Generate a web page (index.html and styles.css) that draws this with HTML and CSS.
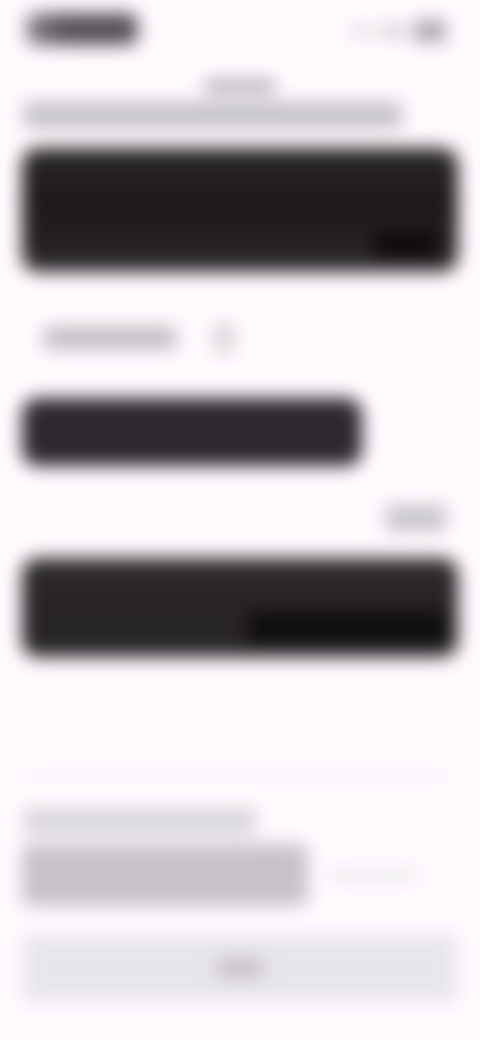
FILE: index.html
```html
<!DOCTYPE html>
<html lang="en">
<head>
<meta charset="utf-8">
<title>Conversation</title>
<link rel="stylesheet" href="styles.css">
</head>
<body>
<main class="screen">
  <header class="top">
    <div class="status-pill"></div>
    <div class="status-icons">
      <span class="dot small"></span>
      <span class="dot mid"></span>
      <span class="dot big"></span>
    </div>
  </header>
  <div class="date-label"></div>
  <div class="intro-line"></div>

  <section class="bubble bubble-one">
    <div class="bubble-dark"></div>
  </section>

  <div class="reaction-row">
    <div class="reaction-label"></div>
    <div class="reaction-icon"></div>
  </div>

  <section class="bubble bubble-two"></section>

  <div class="meta-right"><div class="meta-label"></div></div>

  <section class="bubble bubble-three">
    <div class="bubble-dark-wide"></div>
  </section>

  <div class="divider"></div>

  <footer class="composer">
    <div class="composer-title"></div>
    <div class="composer-row">
      <div class="composer-input"></div>
      <div class="composer-hint"></div>
    </div>
    <div class="send-button"><span class="send-label"></span></div>
  </footer>
</main>
</body>
</html>
```

FILE: styles.css
```css
html, body {
  margin: 0;
  padding: 0;
  background: #fefafe;
}
.screen {
  width: 480px;
  height: 1040px;
  box-sizing: border-box;
  padding: 14px 22px 0;
  display: flex;
  flex-direction: column;
  filter: blur(9px);
  overflow: hidden;
}
.top {
  display: flex;
  justify-content: space-between;
  align-items: center;
  height: 30px;
  padding: 0 12px 0 4px;
}
.status-pill {
  width: 112px;
  height: 32px;
  border-radius: 10px;
  background: linear-gradient(90deg, #8a848a 0, #565056 35%, #565056 100%);
}
.status-icons {
  display: flex;
  align-items: center;
  gap: 10px;
  margin-top: 4px;
}
.dot { display: block; border-radius: 4px; }
.dot.small { width: 20px; height: 8px; background: #d0ccd1; }
.dot.mid { width: 22px; height: 12px; background: #c8c4c9; }
.dot.big { width: 32px; height: 22px; background: #aaa5ab; }
.date-label {
  align-self: center;
  width: 70px;
  height: 12px;
  margin-top: 36px;
  background: #aaa6ac;
}
.intro-line {
  width: 378px;
  height: 26px;
  margin: 10px 0 0 2px;
  background: #c4c1c7;
}
.bubble {
  background: #2b282c;
  border-radius: 16px;
  box-sizing: border-box;
  position: relative;
  overflow: hidden;
}
.bubble-one {
  height: 124px;
  margin-top: 20px;
  padding: 34px 20px 14px 28px;
  display: flex;
  flex-direction: column;
  justify-content: flex-end;
  align-items: flex-end;
  background: linear-gradient(180deg, #2b282c 0, #1d191d 40%, #211d21 70%, #302d31 100%);
}
.bubble-dark {
  width: 64px;
  height: 26px;
  background: #0e0a0e;
}
.reaction-row {
  display: flex;
  align-items: center;
  gap: 38px;
  margin-top: 55px;
  padding-left: 22px;
  height: 22px;
}
.reaction-label {
  width: 132px;
  height: 22px;
  background: #bfbcc1;
}
.reaction-icon {
  width: 20px;
  height: 30px;
  background: #d8d5d9;
}
.bubble-two {
  width: 340px;
  height: 68px;
  margin-top: 49px;
  background: #2d292e;
}
.meta-right {
  display: flex;
  justify-content: flex-end;
  padding-right: 12px;
  margin-top: 39px;
}
.meta-label {
  width: 60px;
  height: 26px;
  background: #c8c5ca;
}
.bubble-three {
  height: 99px;
  margin-top: 27px;
  padding: 0 12px 14px 0;
  display: flex;
  justify-content: flex-end;
  align-items: flex-end;
  background: linear-gradient(180deg, #2f2c30 0, #282428 35%, #282529 100%);
}
.bubble-dark-wide {
  width: 198px;
  height: 32px;
  background: #100d10;
}
.divider {
  height: 2px;
  margin-top: 118px;
  background: #e6e3e7;
}
.composer {
  display: flex;
  flex-direction: column;
  margin-top: 31px;
}
.composer-title {
  width: 232px;
  height: 26px;
  margin-left: 2px;
  background: #d8d5da;
}
.composer-row {
  display: flex;
  align-items: center;
  gap: 22px;
  margin-top: 10px;
}
.composer-input {
  width: 286px;
  height: 62px;
  border-radius: 8px;
  background: #c6c2c8;
}
.composer-hint {
  width: 88px;
  height: 10px;
  background: #ebe8ed;
}
.send-button {
  display: flex;
  align-items: center;
  justify-content: center;
  height: 68px;
  margin-top: 28px;
  border-radius: 8px;
  background: #e9e6eb;
}
.send-label {
  display: block;
  width: 46px;
  height: 18px;
  background: #c2bec4;
}
```
